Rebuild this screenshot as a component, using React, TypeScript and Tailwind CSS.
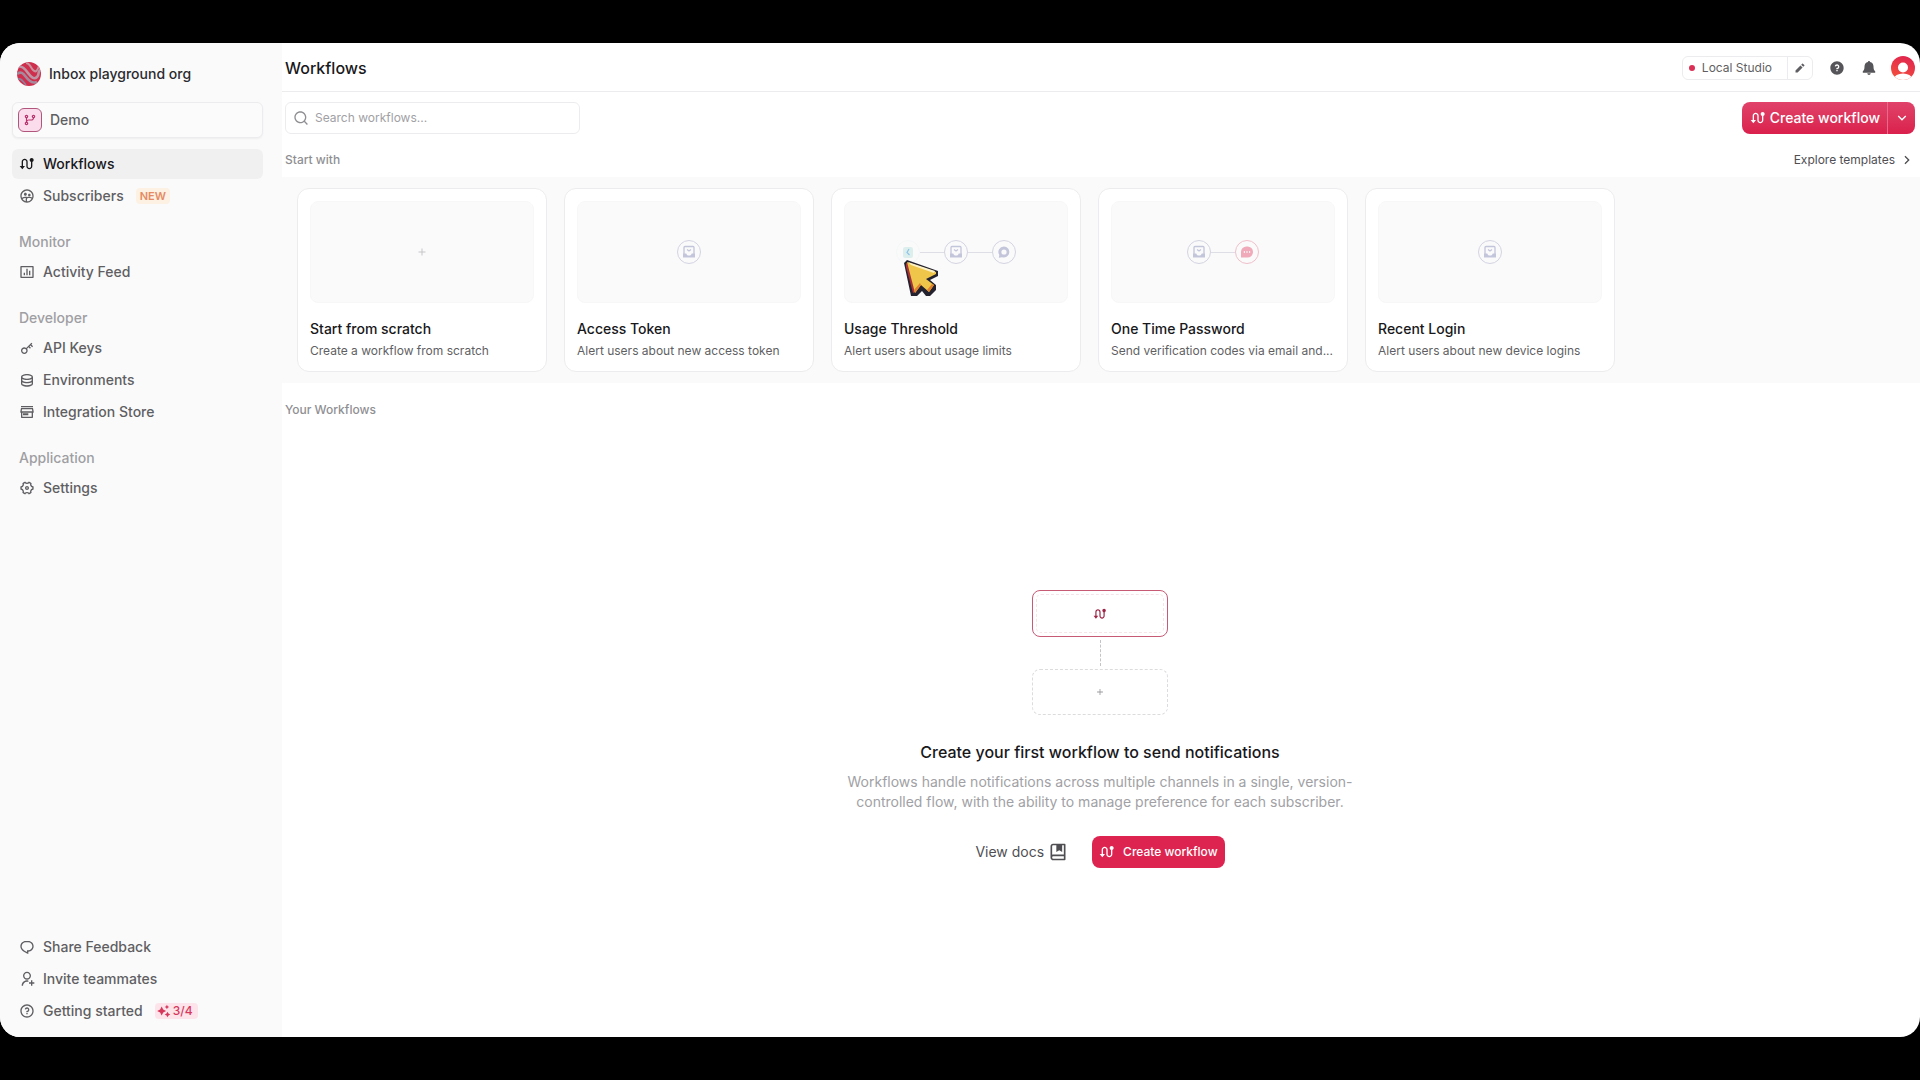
import type { ReactNode } from "react";
import type { IconType } from "react-icons";
import {
  RiAddFill,
  RiArrowDownSLine,
  RiArrowRightSLine,
  RiBarChartBoxLine,
  RiBookMarkedLine,
  RiChat1Line,
  RiDatabase2Line,
  RiGitBranchLine,
  RiGroup2Line,
  RiKey2Line,
  RiPencilFill,
  RiQuestionFill,
  RiQuestionLine,
  RiRouteFill,
  RiSearchLine,
  RiSettings4Line,
  RiSparkling2Fill,
  RiStore3Line,
  RiUserAddLine,
} from "react-icons/ri";

function NavItem({ icon: Icon, label, active, children }: { icon: IconType; label: string; active?: boolean; children?: ReactNode }) {
  return (
    <a
      href="#"
      className={
        active
          ? "flex h-[30px] items-center gap-2 rounded-md bg-[#f0f0f1] px-[7px] text-sm font-[450] text-[#18181b]"
          : "flex h-[30px] items-center gap-2 rounded-md px-[7px] text-sm font-[450] text-[#5f5f63]"
      }
    >
      <Icon className="size-4 shrink-0" aria-hidden />
      <span>{label}</span>
      {children}
    </a>
  );
}

function NavGroup({ title, children }: { title: string; children: ReactNode }) {
  return (
    <section className="mt-4">
      <h2 className="px-[7px] text-sm leading-[30px] font-[450] text-[#9f9fa3]">{title}</h2>
      <div className="flex flex-col gap-[2px]">{children}</div>
    </section>
  );
}

function OrgLogo() {
  return (
    <svg viewBox="0 0 24 24" className="size-6 shrink-0" aria-hidden>
      <defs>
        <clipPath id="org-clip">
          <circle cx="12" cy="12" r="12" />
        </clipPath>
      </defs>
      <g clipPath="url(#org-clip)" fill="none">
        <rect width="24" height="24" fill="#cf2f4c" />
        <path d="M0 5C5 3 8 7 11 11S17 18 20 15 20 9 24 8" stroke="#bd97a6" strokeWidth="2.6" />
        <path d="M0 12C4 9 6 11 9 15S15 22 20 20" stroke="#a58a9d" strokeWidth="2.6" />
        <path d="M9 1C13 1 13 5 16 8S20 9 22 4" stroke="#c7939f" strokeWidth="2" />
        <path d="M1 17C4 16 6 19 9 23" stroke="#8f7f9b" strokeWidth="1.6" />
      </g>
    </svg>
  );
}

function BellIcon() {
  return (
    <svg viewBox="0 0 16 16" className="size-4" fill="currentColor" aria-hidden>
      <path d="M8 1C8.600 1 9 1.400 9 2C11.300 2.500 12.500 4.300 12.500 6.500C12.500 9.200 13 10.300 14.200 11.300V12.700H1.800V11.300C3 10.300 3.500 9.200 3.500 6.500C3.500 4.300 4.700 2.500 7 2C7 1.400 7.400 1 8 1ZM6.300 13.300H9.700C9.600 14.300 8.900 15 8 15S6.400 14.300 6.300 13.300Z" />
    </svg>
  );
}

function Avatar() {
  return (
    <svg viewBox="0 0 24 24" className="size-6" aria-hidden>
      <defs>
        <linearGradient id="avatar-fill" x1="0.7" y1="0" x2="0.3" y2="1">
          <stop offset="0" stopColor="#e0244f" />
          <stop offset="1" stopColor="#f4513c" />
        </linearGradient>
        <clipPath id="avatar-clip">
          <circle cx="12" cy="12" r="12" />
        </clipPath>
      </defs>
      <g clipPath="url(#avatar-clip)">
        <rect width="24" height="24" fill="url(#avatar-fill)" />
        <circle cx="12" cy="11.500" r="5" fill="#fff" />
        <ellipse cx="12" cy="23" rx="9" ry="5.500" fill="#fff" />
      </g>
    </svg>
  );
}

type StepKind = "email" | "chat" | "sms" | "inapp";

const stepTone: Record<StepKind, string> = {
  email: "border-[#d3d3e2] text-[#c3c5db]",
  chat: "border-[#d3d3e2] text-[#c3c5db]",
  sms: "border-[#f0bfca] text-[#efa9b8]",
  inapp: "border-[#f3f6f7] text-[#bfe0e6]",
};

function StepGlyph({ kind }: { kind: StepKind }) {
  return (
    <svg viewBox="0 0 14 14" className="size-[14px]" fill="currentColor" aria-hidden>
      {kind === "email" && (
        <>
          <path d="M1 8.500H4.200C4.500 9.800 5.600 10.600 7 10.600S9.500 9.800 9.800 8.500H13V12.500H1Z" />
          <path d="M2 9V2.500C2 2 2.500 1.500 3 1.500H11C11.500 1.500 12 2 12 2.500V9M5 4.500L7 6 9 4.500" fill="none" stroke="currentColor" strokeWidth="1.300" />
        </>
      )}
      {kind === "chat" && (
        <path fillRule="evenodd" d="M7 1.500A5.500 5.500 0 1 1 5 12.200L1.800 12.800 2.300 10A5.500 5.500 0 0 1 7 1.500ZM7 4.400A2.600 2.600 0 1 0 7 9.600 2.600 2.600 0 0 0 7 4.400Z" />
      )}
      {kind === "sms" && (
        <>
          <path d="M1 7A5.500 5.500 0 0 1 6.500 1.500H7.500A5.500 5.500 0 0 1 7.500 12.500H1Z" />
          <path d="M3.800 7H5M6.400 7H7.600M9 7H10.200" stroke="#fff" strokeWidth="1.300" />
        </>
      )}
      {kind === "inapp" && (
        <>
          <rect x="2" y="2" width="10" height="11" rx="2" fill="#dcefed" />
          <path d="M8 4L6 7.500 8.500 10" fill="none" stroke="#8fc3ea" strokeWidth="1.200" />
        </>
      )}
    </svg>
  );
}

function TemplateCard({ title, description, steps }: { title: string; description: string; steps: StepKind[] }) {
  return (
    <button type="button" className="w-[250px] shrink-0 rounded-xl border border-[#ececee] bg-white px-3 pt-3 pb-[10px] text-left">
      <span className="flex h-[102px] items-center justify-center rounded-lg border border-[#f7f7f8] bg-[#fafafa]">
        {steps.length === 0 && <RiAddFill className="size-3 text-[#c6c6ca]" aria-hidden />}
        {steps.map((kind, i) => (
          <span key={i} className="flex items-center">
            {i > 0 && <span className="h-px w-6 bg-[#dedee6]" />}
            <span className={`flex size-6 items-center justify-center rounded-full border ${stepTone[kind]}`}>
              <StepGlyph kind={kind} />
            </span>
          </span>
        ))}
      </span>
      <span className="mt-[14px] block text-sm leading-6 font-medium text-[#18181b]">{title}</span>
      <span className="block text-xs leading-5 whitespace-nowrap text-[#5f5f63]">{description}</span>
    </button>
  );
}

const templates: { title: string; description: string; steps: StepKind[] }[] = [
  { title: "Start from scratch", description: "Create a workflow from scratch", steps: [] },
  { title: "Access Token", description: "Alert users about new access token", steps: ["email"] },
  { title: "Usage Threshold", description: "Alert users about usage limits", steps: ["inapp", "email", "chat"] },
  { title: "One Time Password", description: "Send verification codes via email and...", steps: ["email", "sms"] },
  { title: "Recent Login", description: "Alert users about new device logins", steps: ["email"] },
];

function PixelCursor() {
  return (
    <svg viewBox="0 0 37 38" className="absolute top-[82px] left-[621px] h-[38px] w-[37px]" aria-hidden>
      <path d="M1 4L4 1 35 12V17L27 21 33 26V31L27 37H23L19 32 14 37H8Z" fill="#25222f" />
      <path d="M3 4L6 5 12 33 10 34 3 8Z" fill="#a83236" />
      <path d="M4 3L33 13V15L23 20 31 26 26 33 18 26 12 34Z" fill="#f0c64a" />
      <path d="M5 3L32 12 31 14 8 6Z" fill="#fbf1c4" />
      <path d="M31 26L26 33 24 31 29 25ZM18 26L12 34 11 31 17 24Z" fill="#e0812f" />
    </svg>
  );
}

function Sidebar() {
  return (
    <aside className="flex w-[282px] shrink-0 flex-col bg-[#fafafa] px-3 pt-4 pb-[11px]">
      <button type="button" className="flex h-[30px] items-center gap-2 px-[5px] text-sm font-medium text-[#2b2b2f]">
        <OrgLogo />
        Inbox playground org
      </button>
      <button
        type="button"
        className="mt-[13px] mr-[7px] flex h-9 items-center gap-2 rounded-md border border-[#ececee] bg-[#fbfbfb] px-[5px] text-sm font-[450] text-[#5f5f63] shadow-xs"
      >
        <span className="flex size-6 items-center justify-center rounded-md border border-[#b0567c] bg-[#fbdcec] text-[#b8336b]">
          <RiGitBranchLine className="size-[14px]" aria-hidden />
        </span>
        Demo
      </button>
      <nav className="mt-[11px] mr-[7px] flex grow flex-col">
        <div className="flex flex-col gap-[2px]">
          <NavItem icon={RiRouteFill} label="Workflows" active />
          <NavItem icon={RiGroup2Line} label="Subscribers">
            <span className="ml-1 rounded-sm bg-[#fdf1e4] px-1 text-[11px] leading-4 font-semibold text-[#e58a63]">NEW</span>
          </NavItem>
        </div>
        <NavGroup title="Monitor">
          <NavItem icon={RiBarChartBoxLine} label="Activity Feed" />
        </NavGroup>
        <NavGroup title="Developer">
          <NavItem icon={RiKey2Line} label="API Keys" />
          <NavItem icon={RiDatabase2Line} label="Environments" />
          <NavItem icon={RiStore3Line} label="Integration Store" />
        </NavGroup>
        <NavGroup title="Application">
          <NavItem icon={RiSettings4Line} label="Settings" />
        </NavGroup>
        <div className="mt-auto flex flex-col gap-[2px]">
          <NavItem icon={RiChat1Line} label="Share Feedback" />
          <NavItem icon={RiUserAddLine} label="Invite teammates" />
          <NavItem icon={RiQuestionLine} label="Getting started">
            <span className="ml-1 flex items-center gap-[2px] rounded-sm bg-[#fce4ea] pr-[5px] pl-[2px] text-xs leading-4 font-medium text-[#d6385c]">
              <RiSparkling2Fill className="size-[14px]" aria-hidden />
              3/4
            </span>
          </NavItem>
        </div>
      </nav>
    </aside>
  );
}

function TopBar() {
  return (
    <header className="flex h-[49px] items-center justify-between border-b border-[#ececee] pt-px pr-[5px] pl-[3px]">
      <h1 className="text-base font-[450] text-[#18181b]">Workflows</h1>
      <div className="flex items-center">
        <div className="flex h-6 items-center rounded-md border border-[#ececee] text-xs text-[#5f5f63]">
          <span className="ml-[6px] size-[6px] rounded-full bg-[#dc2f55]" />
          <span className="mr-[15px] ml-[7px]">Local Studio</span>
          <button type="button" aria-label="Edit" className="flex h-full w-[25px] items-center justify-center border-l border-[#ececee]">
            <RiPencilFill className="size-3" aria-hidden />
          </button>
        </div>
        <button type="button" aria-label="Help" className="ml-4 text-[#56565a]">
          <RiQuestionFill className="size-4" aria-hidden />
        </button>
        <button type="button" aria-label="Notifications" className="ml-4 text-[#56565a]">
          <BellIcon />
        </button>
        <button type="button" aria-label="Account" className="ml-[14px]">
          <Avatar />
        </button>
      </div>
    </header>
  );
}

function EmptyState() {
  return (
    <section className="flex flex-col items-center pt-[172px] pr-[2px] text-center">
      <div className="w-[136px] rounded-lg border border-[#c75a75] p-[3px]">
        <div className="flex h-[39px] items-center justify-center rounded-[5px] border border-dashed border-[#f6e4e8] text-[#9c2446]">
          <RiRouteFill className="size-[14px]" aria-hidden />
        </div>
      </div>
      <div className="my-[3px] h-[26px] border-l border-dashed border-[#c4c4c8]" />
      <div className="flex h-[46px] w-[136px] items-center justify-center rounded-lg border border-dashed border-[#dcdcdf] text-[#9a9a9e]">
        <RiAddFill className="size-[10px]" aria-hidden />
      </div>
      <h2 className="mt-[25px] text-base font-medium text-[#18181b]">Create your first workflow to send notifications</h2>
      <p className="mt-2 max-w-[520px] text-sm text-[#a1a1a5]">
        Workflows handle notifications across multiple channels in a single, version-controlled flow, with the ability to manage preference for each subscriber.
      </p>
      <div className="mt-6 flex items-center gap-6">
        <a href="#" className="flex items-center gap-1 text-sm text-[#4f4f53]">
          View docs
          <RiBookMarkedLine className="size-5" aria-hidden />
        </a>
        <button type="button" className="flex h-8 items-center gap-2 rounded-lg bg-[#dd2450] px-[7px] text-xs font-medium text-white">
          <RiRouteFill className="size-4" aria-hidden />
          Create workflow
        </button>
      </div>
    </section>
  );
}

export default function App() {
  return (
    <div className="min-h-screen bg-black py-[43px] font-['Inter',sans-serif] antialiased">
      <div className="flex min-h-[calc(100vh-86px)] overflow-hidden rounded-[20px] bg-white">
        <Sidebar />
        <main className="flex min-w-0 grow flex-col">
          <TopBar />
          <div className="flex items-center justify-between pt-[10px] pr-[5px] pl-[3px]">
            <label className="flex h-8 w-[295px] items-center gap-[6px] rounded-md border border-[#ececee] px-[7px] text-[#8f8f93]">
              <RiSearchLine className="size-4" aria-hidden />
              <input
                type="search"
                aria-label="Search workflows"
                placeholder="Search workflows..."
                className="min-w-0 grow bg-transparent text-xs outline-none placeholder:text-[#a1a1a5]"
              />
            </label>
            <div className="flex h-8 rounded-lg bg-linear-to-b from-[#e0426a] to-[#da1f4c] text-sm font-medium text-white">
              <button type="button" className="flex items-center gap-1 pr-[7px] pl-2">
                <RiRouteFill className="size-4" aria-hidden />
                Create workflow
              </button>
              <button type="button" aria-label="More options" className="flex w-7 items-center justify-center border-l border-[#e66a89]">
                <RiArrowDownSLine className="size-4" aria-hidden />
              </button>
            </div>
          </div>
          <div className="flex h-[43px] items-center justify-between pt-2 pr-[5px] pl-[3px] text-xs">
            <h2 className="font-medium text-[#8f8f93]">Start with</h2>
            <a href="#" className="flex items-center gap-1 text-[#4f4f53]">
              Explore templates
              <RiArrowRightSLine className="size-4" aria-hidden />
            </a>
          </div>
          <div className="relative flex gap-[17px] bg-[#fafafa] px-[15px] py-[11px]">
            {templates.map((t) => (
              <TemplateCard key={t.title} {...t} />
            ))}
            <PixelCursor />
          </div>
          <h2 className="mt-[19px] pl-[3px] text-xs font-medium text-[#8f8f93]">Your Workflows</h2>
          <EmptyState />
        </main>
      </div>
    </div>
  );
}
